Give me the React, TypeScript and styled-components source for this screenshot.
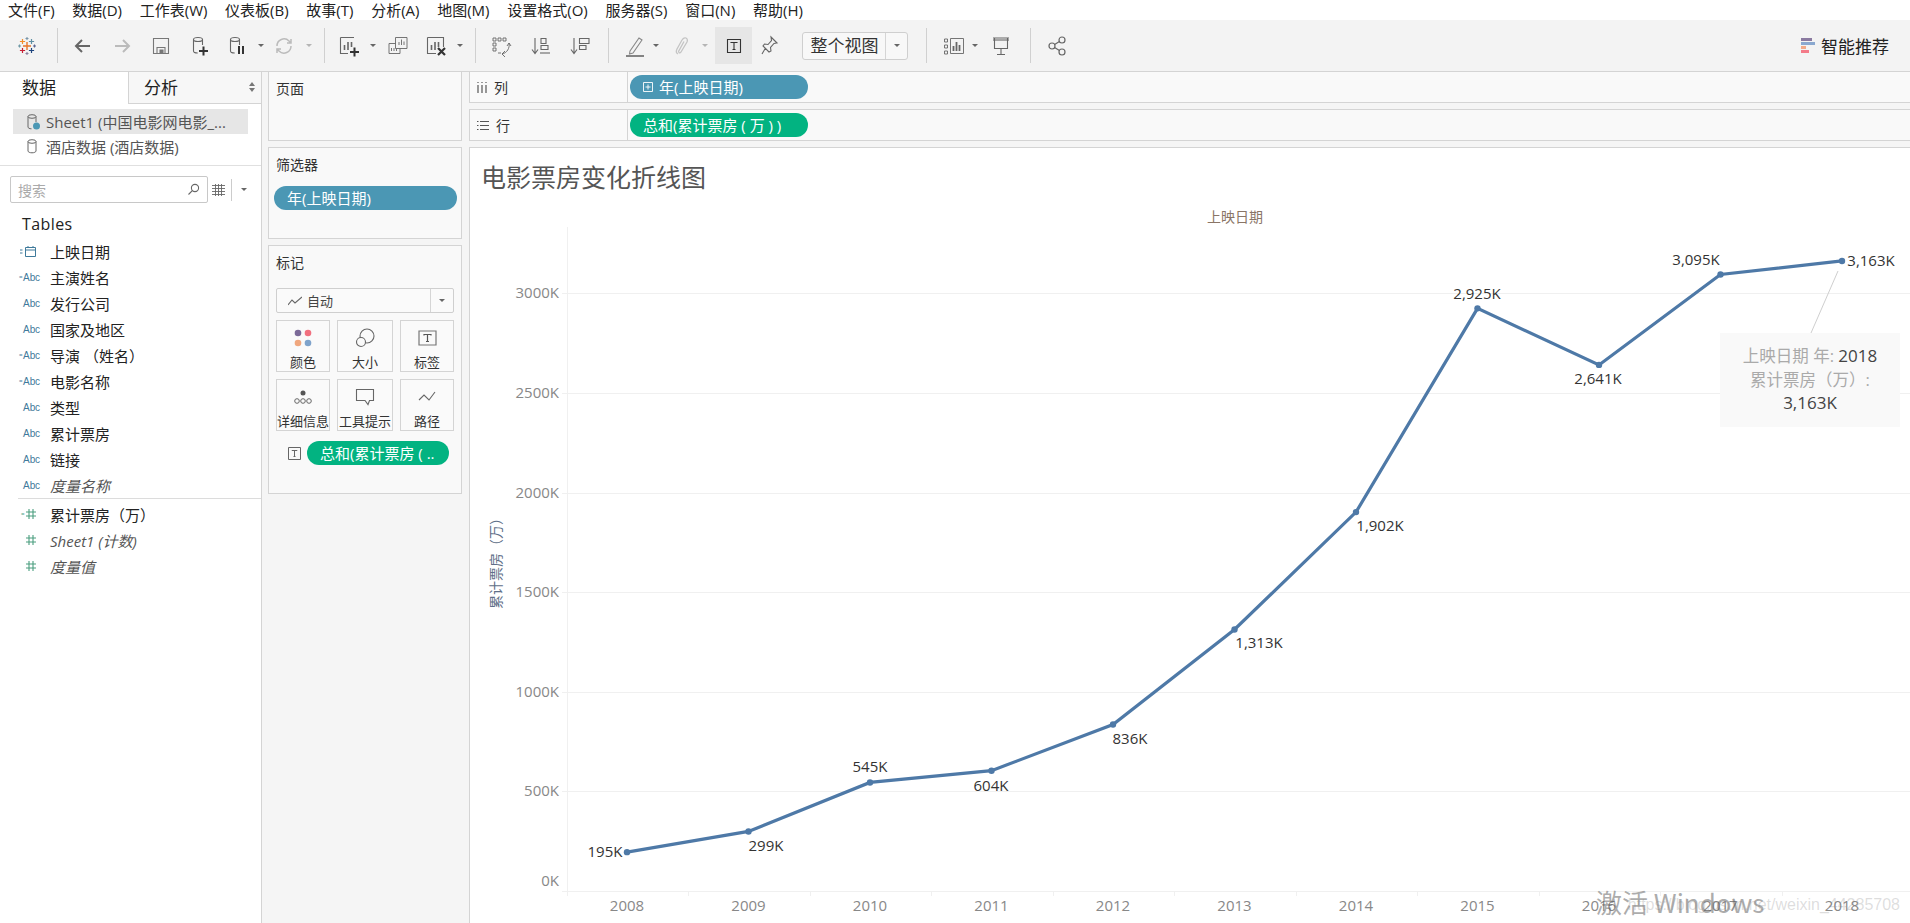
import React from "react";
import styled, { createGlobalStyle } from "styled-components";

const FONT = `"Open Sans", "Noto Sans CJK SC", sans-serif`;

const Global = createGlobalStyle`
  html, body { margin: 0; padding: 0; background: #fff; }
  body { font-family: ${FONT}; color: #222; overflow: hidden; }
  * { box-sizing: border-box; }
`;

const Page = styled.div`
  width: 1910px; height: 923px; overflow: hidden;
  display: flex; flex-direction: column; background: #f5f5f5;
`;
const MenuBar = styled.div`
  height: 20px; background: #fff; display: flex; align-items: center;
  gap: 17.7px; padding-left: 8px; font-size: 15px; line-height: 18px; color: #222; flex: none;
`;
const Toolbar = styled.div`
  height: 52px; flex: none; background: #f3f3f3; border-bottom: 1px solid #d4d4d4;
  display: flex; align-items: center; padding-right: 21px;
`;
const Slot = styled.div<{ $ml: number; $w?: number; $active?: boolean }>`
  margin-left: ${p => p.$ml}px; width: ${p => p.$w ?? 24}px; flex: none;
  height: ${p => (p.$active ? "37px" : "24px")};
  display: flex; align-items: center; justify-content: center;
  background: ${p => (p.$active ? "#e6e6e6" : "transparent")};
`;
const ToolSep = styled.div<{ $ml: number }>`
  margin-left: ${p => p.$ml}px; width: 1px; height: 35px; background: #d0d0d0; flex: none;
`;
const Caret = styled.div<{ $ml: number; $light?: boolean }>`
  margin-left: ${p => p.$ml + 1}px; margin-right: 1px; width: 6px; flex: none; height: 3px;
  border-left: 3px solid transparent; border-right: 3px solid transparent;
  border-top: 3px solid ${p => (p.$light ? "#b5b5b5" : "#666")};
`;
const FitBox = styled.div`
  margin-left: 21px; width: 106px; height: 28px; flex: none; background: #f8f8f8;
  border: 1px solid #cfcfcf; border-radius: 3px; display: flex; align-items: center;
  font-size: 17px; color: #333;
`;
const FitLabel = styled.div`
  flex: 1; text-align: center; padding-left: 1px; line-height: 26px;
`;
const FitArrow = styled.div`
  width: 22px; height: 26px; border-left: 1px solid #d5d5d5;
  display: flex; align-items: center; justify-content: center;
`;
const Smart = styled.div`
  margin-left: auto; display: flex; align-items: center; gap: 6px; font-size: 17px; color: #222;
`;

const Main = styled.div`
  flex: 1; display: flex; min-height: 0;
`;
const LeftPanel = styled.div`
  width: 262px; flex: none; background: #fff; border-right: 1px solid #d4d4d4;
  display: flex; flex-direction: column;
`;
const Tabs = styled.div`
  display: flex; height: 32px; flex: none;
`;
const Tab = styled.div<{ $active?: boolean }>`
  width: ${p => (p.$active ? "128px" : "133px")}; position: relative;
  font-size: 17px; line-height: 31px; padding-left: ${p => (p.$active ? "22px" : "15px")};
  color: #222; background: ${p => (p.$active ? "#fff" : "#f7f7f7")};
  border-left: ${p => (p.$active ? "none" : "1px solid #d4d4d4")};
  border-bottom: ${p => (p.$active ? "none" : "1px solid #d4d4d4")};
`;
const TabArrows = styled.span`
  position: absolute; right: 6px; top: 10px; display: flex; flex-direction: column; gap: 2px;
`;
const SourceList = styled.div`
  padding: 5px 13px 0 13px; height: 62px; border-bottom: 1px solid #e0e0e0; flex: none;
`;
const Source = styled.div<{ $active?: boolean }>`
  height: 25px; display: flex; align-items: center; gap: 5px; padding-left: 12px;
  font-size: 15px; color: #555; white-space: nowrap;
  background: ${p => (p.$active ? "#e6e6e6" : "transparent")};
`;
const SearchRow = styled.div`
  display: flex; align-items: center; padding: 10px 0 0 10px; flex: none;
`;
const SearchBox = styled.div`
  width: 198px; height: 27px; border: 1px solid #c8c8c8; border-radius: 2px; background: #fff;
  display: flex; align-items: center; justify-content: space-between; padding: 0 7px;
  font-size: 14px; color: #aaa;
`;
const SearchTools = styled.div`
  display: flex; align-items: center; margin-left: 4px;
`;
const SearchSep = styled.div`
  width: 1px; height: 22px; background: #ccc; margin: 0 8px 0 6px;
`;
const TablesTitle = styled.div`
  font-size: 16px; line-height: 26px; padding: 8px 0 0 22px; color: #222; letter-spacing: 0.4px;
`;
const Fields = styled.div`
  padding-top: 1px;
`;
const Field = styled.div<{ $italic?: boolean }>`
  height: 26px; display: flex; align-items: center; font-size: 15px; white-space: nowrap;
  color: ${p => (p.$italic ? "#555" : "#222")};
  font-style: ${p => (p.$italic ? "italic" : "normal")};
`;
const FieldIcon = styled.span<{ $inset?: boolean }>`
  width: 40px; margin-right: 10px; flex: none; font-size: 10px; font-style: normal;
  padding-right: ${p => (p.$inset ? "3px" : "0")};
  color: #3f7a9b; letter-spacing: -0.1px;
  font-family: "Liberation Sans", sans-serif; display: flex; justify-content: flex-end; align-items: center;
`;
const FieldEq = styled.span<{ $green?: boolean }>`
  font-size: 6px; letter-spacing: 0; margin-right: 0.5px; color: ${p => (p.$green ? "#4a9e7f" : "#3f7a9b")};
`;
const FieldDivider = styled.div`
  height: 1px; margin: 0 0 2px 18px; background: #dcdcdc;
`;

const Middle = styled.div`
  width: 207px; flex: none; padding: 0 7px 0 6px; display: flex; flex-direction: column; gap: 6px;
`;
const Card = styled.div<{ $h: number; $flushTop?: boolean }>`
  height: ${p => p.$h}px; background: #f9f9f9; border: 1px solid #d4d4d4; flex: none;
  border-top: ${p => (p.$flushTop ? "none" : "1px solid #d4d4d4")};
`;
const CardTitle = styled.div`
  font-size: 14px; line-height: 20px; padding: 7px 0 0 7px; color: #333;
`;
const Pill = styled.div<{ $green?: boolean }>`
  height: 24px; border-radius: 12px; color: #fff; font-size: 15px; line-height: 24px; white-space: nowrap;
  background: ${p => (p.$green ? "#02b381" : "#4b97b4")};
`;
const FilterPill = styled(Pill)`
  margin: 11px 4px 0 5px; padding-left: 13px;
`;
const MarkSelect = styled.div`
  margin: 15px 7px 0 7px; height: 25px; border: 1px solid #cfcfcf; border-radius: 2px; background: #fafafa;
  display: flex; align-items: center; font-size: 13px; color: #444;
`;
const MarkSelectBody = styled.div`
  flex: 1; display: flex; align-items: center; gap: 5px; padding-left: 11px;
`;
const MarkSelectArrow = styled.div`
  width: 23px; height: 23px; border-left: 1px solid #d5d5d5; display: flex; align-items: center; justify-content: center;
`;
const Tiles = styled.div`
  display: grid; grid-template-columns: 54px 56px 54px; grid-auto-rows: 52px; gap: 7px;
  margin: 7px 0 0 7px;
`;
const Tile = styled.div`
  border: 1px solid #d4d4d4; background: #fafafa; display: flex; flex-direction: column; align-items: center;
  font-size: 13px; color: #333; white-space: nowrap; padding-top: 4px;
`;
const TileIcon = styled.div`
  height: 26px; display: flex; align-items: center; justify-content: center;
`;
const TileLabel = styled.div`
  line-height: 18px; margin-top: 2px;
`;
const MarkField = styled.div`
  display: flex; align-items: center; margin: 10px 0 0 19px; gap: 6px;
`;
const MarkPill = styled(Pill)`
  width: 142px; padding-left: 13px;
`;

const RightCol = styled.div`
  flex: 1; min-width: 0; display: flex; flex-direction: column; gap: 6px;
`;
const Shelf = styled.div<{ $first?: boolean; $h: number }>`
  height: ${p => p.$h}px; flex: none; background: #f9f9f9; display: flex; align-items: center;
  border-bottom: 1px solid #d4d4d4; border-left: 1px solid #d4d4d4;
  border-top: ${p => (p.$first ? "none" : "1px solid #d4d4d4")};
`;
const ShelfLabel = styled.div`
  width: 158px; height: 100%; flex: none; display: flex; align-items: center; gap: 7px; padding-left: 7px;
  font-size: 14px; color: #333; border-right: 1px solid #d4d4d4;
`;
const ShelfPill = styled(Pill)`
  width: 178px; margin-left: 2px; display: flex; align-items: center; padding-left: 13px; gap: 6px;
`;
const Canvas = styled.div`
  flex: 1; min-height: 0; position: relative; background: #fff; border: 1px solid #d4d4d4;
  border-width: 1px 0 0 1px; overflow: hidden;
`;
const ChartTitle = styled.div`
  height: 60px; padding: 14px 0 0 11px; font-size: 25px; line-height: 30px; color: #555;
`;
const ChartSvg = styled.svg`
  display: block;
`;
const Annotation = styled.div`
  position: absolute; left: 1250px; top: 185px; width: 180px; height: 94px; background: #f9f9f9;
  padding-top: 11px; text-align: center; font-size: 16.5px; line-height: 23.5px; color: #aaa;
`;
const AnnoValue = styled.span`
  color: #444; font-size: 17px;
`;
const Watermark = styled.div`
  position: absolute; left: 1126px; top: 736px; font-size: 26px; line-height: 36px; white-space: nowrap;
  color: rgba(90, 90, 90, 0.5); font-family: "Noto Sans CJK SC", "Open Sans", sans-serif;
`;
const CsdnMark = styled.div`
  position: absolute; right: 10px; top: 746px; font-size: 16px; line-height: 22px; white-space: nowrap;
  color: rgba(120, 120, 120, 0.25); font-family: "Liberation Sans", sans-serif;
`;
const AxisText = styled.text`
  font-family: ${FONT}; font-size: 15px; fill: #888;
`;
const DataText = styled.text`
  font-family: ${FONT}; font-size: 15px; fill: #333;
`;
const HeadText = styled.text`
  font-family: ${FONT}; font-size: 14px; fill: #8a7566;
`;
const SideText = styled.text`
  font-family: ${FONT}; font-size: 14px; fill: #5f6f88;
`;

const Ico: React.FC<{ children: React.ReactNode; w?: number; h?: number; stroke?: string; sw?: number }> = ({
  children, w = 24, h = 24, stroke = "#666", sw = 1.1,
}) => (
  <svg width={w} height={h} viewBox={`0 0 ${w} ${h}`} fill="none" stroke={stroke} strokeWidth={sw}>
    {children}
  </svg>
);

const Plus: React.FC<{ x: number; y: number; r: number; c: string; sw?: number }> = ({ x, y, r, c, sw = 1.1 }) => (
  <path d={`M${x - r} ${y}H${x + r}M${x} ${y - r}V${y + r}`} stroke={c} strokeWidth={sw} />
);

const Logo = () => (
  <Ico>
    <Plus x={12} y={12} r={4} c="#e8762b" sw={1.4} />
    <Plus x={7.5} y={7.5} r={2.6} c="#f28e2b" sw={1.2} />
    <Plus x={16.5} y={7.5} r={2.6} c="#5f8fa3" sw={1.2} />
    <Plus x={7.5} y={16.5} r={2.6} c="#c72035" sw={1.2} />
    <Plus x={16.5} y={16.5} r={2.6} c="#1f457e" sw={1.2} />
    <Plus x={12} y={4.5} r={1.5} c="#7b96a8" />
    <Plus x={12} y={19.5} r={1.5} c="#8a7f9e" />
    <Plus x={4.5} y={12} r={1.5} c="#7099a6" />
    <Plus x={19.5} y={12} r={1.5} c="#5b6591" />
  </Ico>
);
const DbBody = ({ s = "#666" }: { s?: string }) => (
  <g stroke={s}>
    <ellipse cx="10" cy="5.5" rx="4.5" ry="2" />
    <path d="M5.5 5.5V17c0 1.2 1.8 2 4.2 2M14.5 5.5V11" />
  </g>
);

export default function App() {
  const years = [2008, 2009, 2010, 2011, 2012, 2013, 2014, 2015, 2016, 2017, 2018];
  const vals = [195, 299, 545, 604, 836, 1313, 1902, 2925, 2641, 3095, 3163];
  const X = (i: number) => 627 + i * 121.5;
  const Y = (v: number) => 891 - v * 0.1992;
  const pts = vals.map((v, i) => `${X(i)},${Y(v)}`).join(" ");
  const labels: [string, number, number][] = [
    ["195K", 605, 852], ["299K", 766, 846], ["545K", 870, 767], ["604K", 991, 786], ["836K", 1130, 739],
    ["1,313K", 1259, 643], ["1,902K", 1380, 526], ["2,925K", 1477, 294], ["2,641K", 1598, 379],
    ["3,095K", 1696, 260], ["3,163K", 1871, 261],
  ];
  const ticks = [0, 500, 1000, 1500, 2000, 2500, 3000];
  const menu = ["文件(F)", "数据(D)", "工作表(W)", "仪表板(B)", "故事(T)", "分析(A)", "地图(M)", "设置格式(O)", "服务器(S)", "窗口(N)", "帮助(H)"];
  const fields: [string, boolean, boolean][] = [
    ["主演姓名", true, false], ["发行公司", false, false], ["国家及地区", false, false],
    ["导演 （姓名）", true, false], ["电影名称", true, false], ["类型", false, false],
    ["累计票房", false, false], ["链接", false, false], ["度量名称", false, true],
  ];
  const Hash = () => (
    <Ico w={12} h={12} stroke="#4a9e7f" sw={1.1}>
      <path d="M4 1V11M8 1V11M1 4H11M1 8H11" />
    </Ico>
  );

  return (
    <Page>
      <Global />
      <MenuBar>{menu.map(m => <span key={m}>{m}</span>)}</MenuBar>
      <Toolbar>
        <Slot $ml={15}><Logo /></Slot>
        <ToolSep $ml={18} />
        <Slot $ml={13}><Ico sw={2}><path d="M19 12H5M11 6l-6 6 6 6" /></Ico></Slot>
        <Slot $ml={15}><Ico sw={2} stroke="#bbb"><path d="M5 12H19M13 6l6 6-6 6" /></Ico></Slot>
        <Slot $ml={15}><Ico stroke="#777"><path d="M4.5 4.5H19.5V19.5H4.5ZM8 19.5V13.5H16V19.5" /><path d="M11 16h3v3.5h-3z" fill="#777" /></Ico></Slot>
        <Slot $ml={14}><Ico><g transform="translate(1 0)"><DbBody /></g><path d="M12 17H21M16.5 12.5V21.5" strokeWidth={2} stroke="#333" /></Ico></Slot>
        <Slot $ml={14}><Ico><DbBody /><path d="M14 12V20M18 12V20" strokeWidth={2} stroke="#333" /></Ico></Slot>
        <Caret $ml={8} />
        <Slot $ml={7}><Ico stroke="#bbb" sw={1.5}><path d="M5 12a7 7 0 0 1 12-5l2 2M19 12a7 7 0 0 1-12 5l-2-2M19 5v4h-4M5 19v-4h4" /></Ico></Slot>
        <Caret $ml={9} $light />
        <ToolSep $ml={11} />
        <Slot $ml={12}><Ico><path d="M3.5 3.5H17M3.5 3.5V19.5H11" /><path d="M7.5 16V11M11 16V8M14.5 13V8" strokeWidth={1.6} /><path d="M13 18H22M17.5 13.5V22.5" strokeWidth={2} stroke="#333" /></Ico></Slot>
        <Caret $ml={8} />
        <Slot $ml={9}><Ico sw={0.9}><path d="M9.5 3.5H21V14.5H9.5Z" fill="#f3f3f3" /><path d="M13 11V8M15.5 11V5.5M18 11V7.5" /><path d="M3 9.5H9.5M3 9.5V19.5H14V14.5M5.5 17V14M8 17V14M10.5 17V15" /></Ico></Slot>
        <Slot $ml={14}><Ico><path d="M3.5 3.5H19.5V13M3.5 3.5V19.5H12" /><path d="M7.5 16V11M11 16V8M14.5 13V8" strokeWidth={1.6} /><path d="M14 14L21 21M21 14L14 21" strokeWidth={2.2} stroke="#333" /></Ico></Slot>
        <Caret $ml={8} />
        <ToolSep $ml={11} />
        <Slot $ml={13}><Ico sw={0.9}><path d="M4 4h3v3H4zM9 4h3v3H9zM14 4h3v3h-3zM4 9h3v3H4zM4 14h3v3H4zM9 19h3" /><path d="M20 9c1 5-2 10-7 11M16 17l-3 3 3 3M18 12l2-3 2 3" /></Ico></Slot>
        <Slot $ml={16}><Ico><path d="M6 4V19M3 15.5L6 19.5L9 15.5" /><path d="M12 4.5H17V9.5H12ZM12 11.5H19V15.5H12Z" /><path d="M11 19H21" /></Ico></Slot>
        <Slot $ml={15}><Ico><path d="M6 4V19M3 15.5L6 19.5L9 15.5" /><path d="M11.5 4.5H21V9.5H11.5ZM11.5 11.5H18V15.5H11.5Z" /></Ico></Slot>
        <ToolSep $ml={16} />
        <Slot $ml={14}><Ico stroke="#888"><path d="M7 17L16 4l3 2-9 13-3.5 1z" /><path d="M3 22H21" strokeWidth={1.6} stroke="#666" /></Ico></Slot>
        <Caret $ml={5} />
        <Slot $ml={9}><Ico stroke="#c4c4c4" sw={1.3}><path d="M9 20c-2-1-2-3-1-5l5-9c1-2 3-2.5 4-2s2 2 1 4l-6 10c-.5 1-1.5 1-2 .5s-.5-1.5 0-2l5-9" /></Ico></Slot>
        <Caret $ml={8} $light />
        <Slot $ml={6} $w={37} $active>
          <Ico w={18} h={18} sw={1.1} stroke="#333"><path d="M2.5 2.5H15.5V15.5H2.5Z" /><path d="M6 6V5.5H12V6M9 5.5V12.5M7.5 12.5H10.5" /></Ico>
        </Slot>
        <Slot $ml={5}><Ico><path d="M14 3l6 6-3 .5-3.5 4 .5 3.5-2 1-6-6 1.5-2 3.5.5 3.5-4zM8.5 14L5 20" /></Ico></Slot>
        <FitBox>
          <FitLabel>整个视图</FitLabel>
          <FitArrow><Caret $ml={0} /></FitArrow>
        </FitBox>
        <ToolSep $ml={18} />
        <Slot $ml={14}><Ico sw={0.9}><path d="M3.5 5h3v3h-3zM3.5 11h3v3h-3zM3.5 17h3v3h-3zM9.5 4.5H22.5V19.5H9.5Z" /><path d="M12.5 17V12M15.5 17V8M18.5 17V11" strokeWidth={1.8} /></Ico></Slot>
        <Caret $ml={6} />
        <Slot $ml={10}><Ico><path d="M4 4H20M5.5 4V14.5H18.5V4M12 14.5V20M8 20.5H16" /><path d="M4 6H20" /></Ico></Slot>
        <ToolSep $ml={17} />
        <Slot $ml={14}>
          <Ico sw={1.2}><circle cx="7" cy="12" r="3" /><circle cx="17" cy="6" r="3" /><circle cx="17" cy="18" r="3" /><path d="M9.6 10.5L14.4 7.5M9.6 13.5L14.4 16.5" /></Ico>
        </Slot>
        <Smart>
          <svg width="14" height="16" viewBox="0 0 14 16">
            <rect x="0" y="0" width="11" height="3" fill="#8a7aa0" />
            <rect x="0" y="4" width="14" height="3" fill="#8aa8cf" />
            <rect x="0" y="8" width="5" height="3" fill="#f2a988" />
            <rect x="0" y="12" width="8" height="3" fill="#f37a88" />
          </svg>
          智能推荐
        </Smart>
      </Toolbar>
      <Main>
        <LeftPanel>
          <Tabs>
            <Tab $active>数据</Tab>
            <Tab>
              分析
              <TabArrows>
                <svg width="6" height="10" viewBox="0 0 6 10" fill="#777"><path d="M0 4L3 0L6 4ZM0 6L3 10L6 6Z" /></svg>
              </TabArrows>
            </Tab>
          </Tabs>
          <SourceList>
            <Source $active>
              <Ico w={16} h={18} sw={1} stroke="#666"><ellipse cx="7" cy="3.5" rx="4" ry="1.8" /><path d="M3 3.5V14c0 1 1.5 1.8 3.5 1.8M11 3.5V9" /><circle cx="11.5" cy="13" r="3.5" fill="#4b97b4" stroke="none" /></Ico>
              Sheet1 (中国电影网电影_...
            </Source>
            <Source>
              <Ico w={16} h={18} sw={1} stroke="#666"><ellipse cx="7" cy="3.5" rx="4" ry="1.8" /><path d="M3 3.5V13c0 1 1.8 1.8 4 1.8s4-.8 4-1.8V3.5" /></Ico>
              酒店数据 (酒店数据)
            </Source>
          </SourceList>
          <SearchRow>
            <SearchBox>
              搜索
              <Ico w={13} h={13} sw={1.1} stroke="#666"><circle cx="8" cy="5" r="3.6" /><path d="M5.3 7.7L1.5 11.5" /></Ico>
            </SearchBox>
            <SearchTools>
              <Ico w={13} h={12} sw={0.9} stroke="#666"><path d="M0 1.5H13M0 4.5H13M0 7.5H13M0 10.5H13M3.5 0V12M6.5 0V12M9.5 0V12" /></Ico>
              <SearchSep />
              <Caret $ml={0} />
            </SearchTools>
          </SearchRow>
          <TablesTitle>Tables</TablesTitle>
          <Fields>
            <Field>
              <FieldIcon $inset>
                <svg width="17" height="13" viewBox="0 0 17 13" fill="none" stroke="#3f7a9b" strokeWidth="1">
                  <path d="M0 5H2.5M0 8H2.5M5.5 2.5H15.5V11.5H5.5ZM5.5 5H15.5M8 1V3M13 1V3" />
                </svg>
              </FieldIcon>
              上映日期
            </Field>
            {fields.map(([t, eq, it]) => (
              <Field key={t} $italic={it}>
                <FieldIcon>{eq && <FieldEq>=</FieldEq>}Abc</FieldIcon>{t}
              </Field>
            ))}
            <FieldDivider />
            <Field>
              <FieldIcon $inset><FieldEq $green>=</FieldEq><Hash /></FieldIcon>累计票房（万）
            </Field>
            <Field $italic><FieldIcon $inset><Hash /></FieldIcon>Sheet1 (计数)</Field>
            <Field $italic><FieldIcon $inset><Hash /></FieldIcon>度量值</Field>
          </Fields>
        </LeftPanel>
        <Middle>
          <Card $h={69} $flushTop><CardTitle>页面</CardTitle></Card>
          <Card $h={92}>
            <CardTitle>筛选器</CardTitle>
            <FilterPill>年(上映日期)</FilterPill>
          </Card>
          <Card $h={249}>
            <CardTitle>标记</CardTitle>
            <MarkSelect>
              <MarkSelectBody>
                <Ico w={14} h={10} sw={1.1}><path d="M0 9L4 4L7 7L14 1" /></Ico>
                自动
              </MarkSelectBody>
              <MarkSelectArrow><Caret $ml={0} /></MarkSelectArrow>
            </MarkSelect>
            <Tiles>
              <Tile>
                <TileIcon><svg width="18" height="18" viewBox="0 0 18 18"><circle cx="4" cy="4" r="3.3" fill="#7b6a98" /><circle cx="14" cy="4" r="3.3" fill="#f1707f" /><circle cx="4" cy="14" r="3.3" fill="#f0a77e" /><circle cx="14" cy="14" r="3.3" fill="#7fa3cb" /></svg></TileIcon>
                <TileLabel>颜色</TileLabel>
              </Tile>
              <Tile>
                <TileIcon><Ico w={20} h={20} sw={1.1}><circle cx="12" cy="8" r="7" /><circle cx="6" cy="14" r="4.5" fill="#fafafa" /></Ico></TileIcon>
                <TileLabel>大小</TileLabel>
              </Tile>
              <Tile>
                <TileIcon><Ico w={19} h={16} sw={1.2} stroke="#777"><path d="M1 1H18V15H1Z" /><path d="M6 5.5V4.5H13V5.5M9.5 4.5V11.5M8 11.5H11" stroke="#555" /></Ico></TileIcon>
                <TileLabel>标签</TileLabel>
              </Tile>
              <Tile>
                <TileIcon><Ico w={20} h={16} sw={1}><circle cx="10" cy="4" r="2.5" fill="#555" stroke="none" /><circle cx="4" cy="12" r="2.3" /><circle cx="10" cy="12" r="2.3" /><circle cx="16" cy="12" r="2.3" /></Ico></TileIcon>
                <TileLabel>详细信息</TileLabel>
              </Tile>
              <Tile>
                <TileIcon><Ico w={20} h={18} sw={1.1}><path d="M1.5 1.5H18.5V12.5H14.5L13 16.5L10 12.5H1.5Z" /></Ico></TileIcon>
                <TileLabel>工具提示</TileLabel>
              </Tile>
              <Tile>
                <TileIcon><Ico w={18} h={12} sw={1.1}><path d="M1 9L6 4L11 9L17 1" /></Ico></TileIcon>
                <TileLabel>路径</TileLabel>
              </Tile>
            </Tiles>
            <MarkField>
              <Ico w={13} h={13} sw={1} stroke="#666"><path d="M.5.5H12.5V12.5H.5Z" /><path d="M4 4V3.5H9V4M6.5 3.5V9.5M5.5 9.5H7.5" /></Ico>
              <MarkPill $green>总和(累计票房 ( ..</MarkPill>
            </MarkField>
          </Card>
        </Middle>
        <RightCol>
          <Shelf $first $h={31}>
            <ShelfLabel>
              <Ico w={10} h={12} sw={1.2} stroke="#555"><path d="M1 4V12M5 4V12M9 4V12M1 1V2M5 1V2M9 1V2" /></Ico>
              列
            </ShelfLabel>
            <ShelfPill>
              <Ico w={10} h={10} sw={0.9} stroke="#fff"><path d="M.5.5H9.5V9.5H.5ZM2.5 5H7.5M5 2.5V7.5" /></Ico>
              年(上映日期)
            </ShelfPill>
          </Shelf>
          <Shelf $h={32}>
            <ShelfLabel>
              <Ico w={12} h={11} sw={1.2} stroke="#555"><path d="M3 1.5H12M3 5.5H12M3 9.5H12M0 1.5H1.5M0 5.5H1.5M0 9.5H1.5" /></Ico>
              行
            </ShelfLabel>
            <ShelfPill $green>总和(累计票房 ( 万 ) )</ShelfPill>
          </Shelf>
          <Canvas>
            <ChartTitle>电影票房变化折线图</ChartTitle>
            <ChartSvg width={1440} height={715} viewBox="470 208 1440 715">
              <HeadText x={1235} y={222} textAnchor="middle">上映日期</HeadText>
              <SideText transform="translate(501 560) rotate(-90)" textAnchor="middle">累计票房（万）</SideText>
              <path d="M567.5 227V891" stroke="#f0f0f0" />
              {ticks.map(t => (
                <path key={t} d={`M562 ${Math.round(Y(t)) + 0.5}H1910`} stroke="#f0f0f0" />
              ))}
              {years.map((_, i) => (
                <path key={i} d={`M${Math.round(566.5 + i * 121.5) + 0.5} 891V896`} stroke="#f0f0f0" />
              ))}
              {ticks.map(t => (
                <AxisText key={t} x={559} y={t === 0 ? 886 : Y(t) + 5} textAnchor="end">{t}K</AxisText>
              ))}
              {years.map((y, i) => (
                <AxisText key={y} x={X(i)} y={911} textAnchor="middle">{y}</AxisText>
              ))}
              <path d="M1838 271L1811 333" stroke="#cfcfcf" />
              <polyline points={pts} fill="none" stroke="#4e79a7" strokeWidth={3.2} />
              {vals.map((v, i) => <circle key={i} cx={X(i)} cy={Y(v)} r={3.2} fill="#4e79a7" />)}
              {labels.map(([t, x, y]) => (
                <DataText key={t} x={x} y={y + 5} textAnchor="middle">{t}</DataText>
              ))}
            </ChartSvg>
            <Annotation>
              <div>上映日期 年: <AnnoValue>2018</AnnoValue></div>
              <div>累计票房（万）:</div>
              <AnnoValue>3,163K</AnnoValue>
            </Annotation>
            <Watermark>激活 Windows</Watermark>
            <CsdnMark>https://blog.csdn.net/weixin_44285708</CsdnMark>
          </Canvas>
        </RightCol>
      </Main>
    </Page>
  );
}
